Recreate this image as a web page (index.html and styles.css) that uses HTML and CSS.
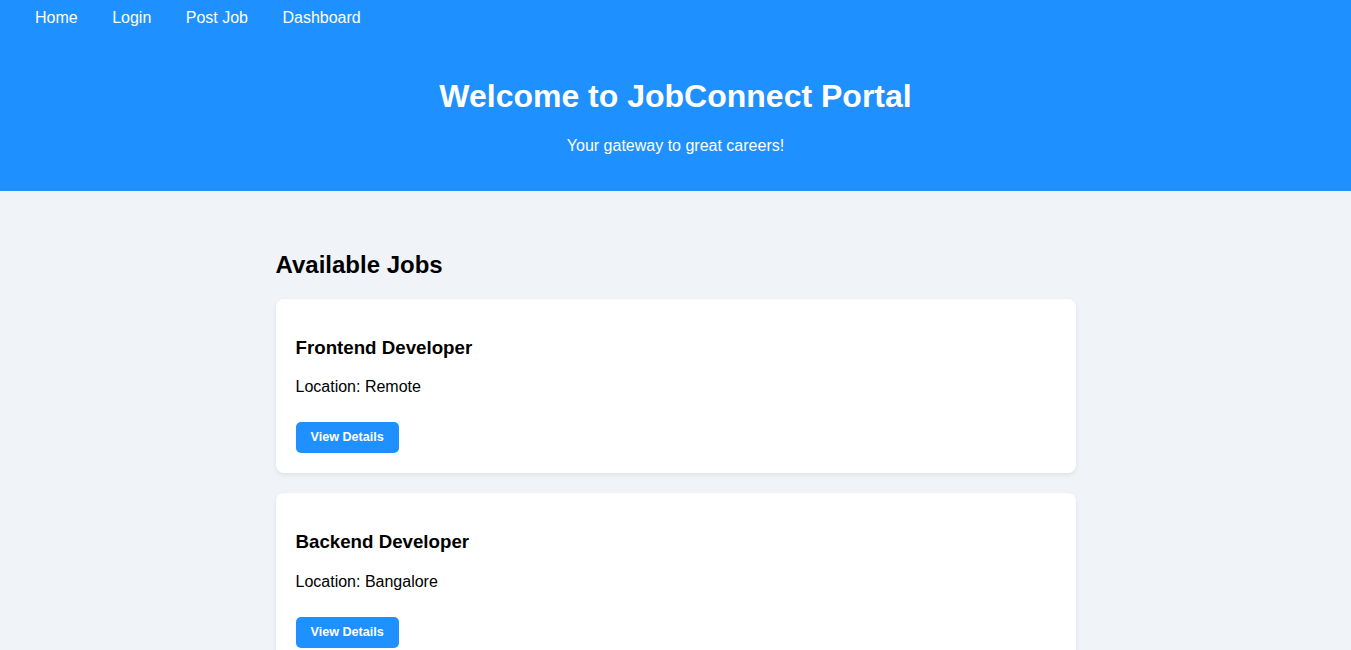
FILE: index.html
```html
<!DOCTYPE html>
<html lang="en">
<head>
<meta charset="UTF-8">
<title>JobConnect Portal</title>
<link rel="stylesheet" href="styles.css">
</head>
<body>
<header class="site-header">
  <nav class="nav">
    <a href="#" class="nav-link">Home</a>
    <a href="#" class="nav-link">Login</a>
    <a href="#" class="nav-link">Post Job</a>
    <a href="#" class="nav-link">Dashboard</a>
  </nav>
  <div class="hero">
    <h1 class="hero-title">Welcome to JobConnect Portal</h1>
    <p class="hero-sub">Your gateway to great careers!</p>
  </div>
</header>
<main class="container">
  <h2 class="section-title">Available Jobs</h2>
  <div class="job-card">
    <h3 class="job-title">Frontend Developer</h3>
    <p class="job-loc">Location: Remote</p>
    <button class="btn">View Details</button>
  </div>
  <div class="job-card">
    <h3 class="job-title">Backend Developer</h3>
    <p class="job-loc">Location: Bangalore</p>
    <button class="btn">View Details</button>
  </div>
</main>
</body>
</html>
```
FILE: styles.css
```css
body {
  margin: 0;
  font-family: "Liberation Sans", Arial, sans-serif;
  background: #f0f4f8;
  color: #000;
}
.site-header {
  background: #1e90ff;
  color: #fff;
  padding-bottom: 20px;
}
.nav {
  padding: 9px 20px 8px;
}
.nav-link {
  color: #fff;
  text-decoration: none;
  margin: 0 15px;
  font-size: 16px;
}
.hero {
  text-align: center;
  padding: 22px 20px 0;
}
.hero-title {
  font-size: 32px;
  margin: 21px 0 22px;
}
.hero-sub {
  font-size: 16px;
  margin: 16px 0 16px;
}
.container {
  width: 800px;
  margin: 0 auto;
  padding: 40px 0 20px;
}
.section-title {
  font-size: 24px;
  margin: 20px 0 20px;
}
.job-card {
  background: #fff;
  border-radius: 8px;
  padding: 20px;
  margin-bottom: 20px;
  box-shadow: 0 2px 5px rgba(0, 0, 0, 0.08);
}
.job-title {
  font-size: 18.72px;
  margin: 17.72px 0 19.72px;
}
.job-loc {
  font-size: 16px;
  margin: 16px 0 26px;
}
.btn {
  display: block;
  background: #1e90ff;
  color: #fff;
  border: none;
  border-radius: 5px;
  padding: 8px 15px;
  font-family: "Liberation Sans", Arial, sans-serif;
  font-size: 12.6px;
  line-height: 15px;
  font-weight: bold;
  cursor: pointer;
}
```
